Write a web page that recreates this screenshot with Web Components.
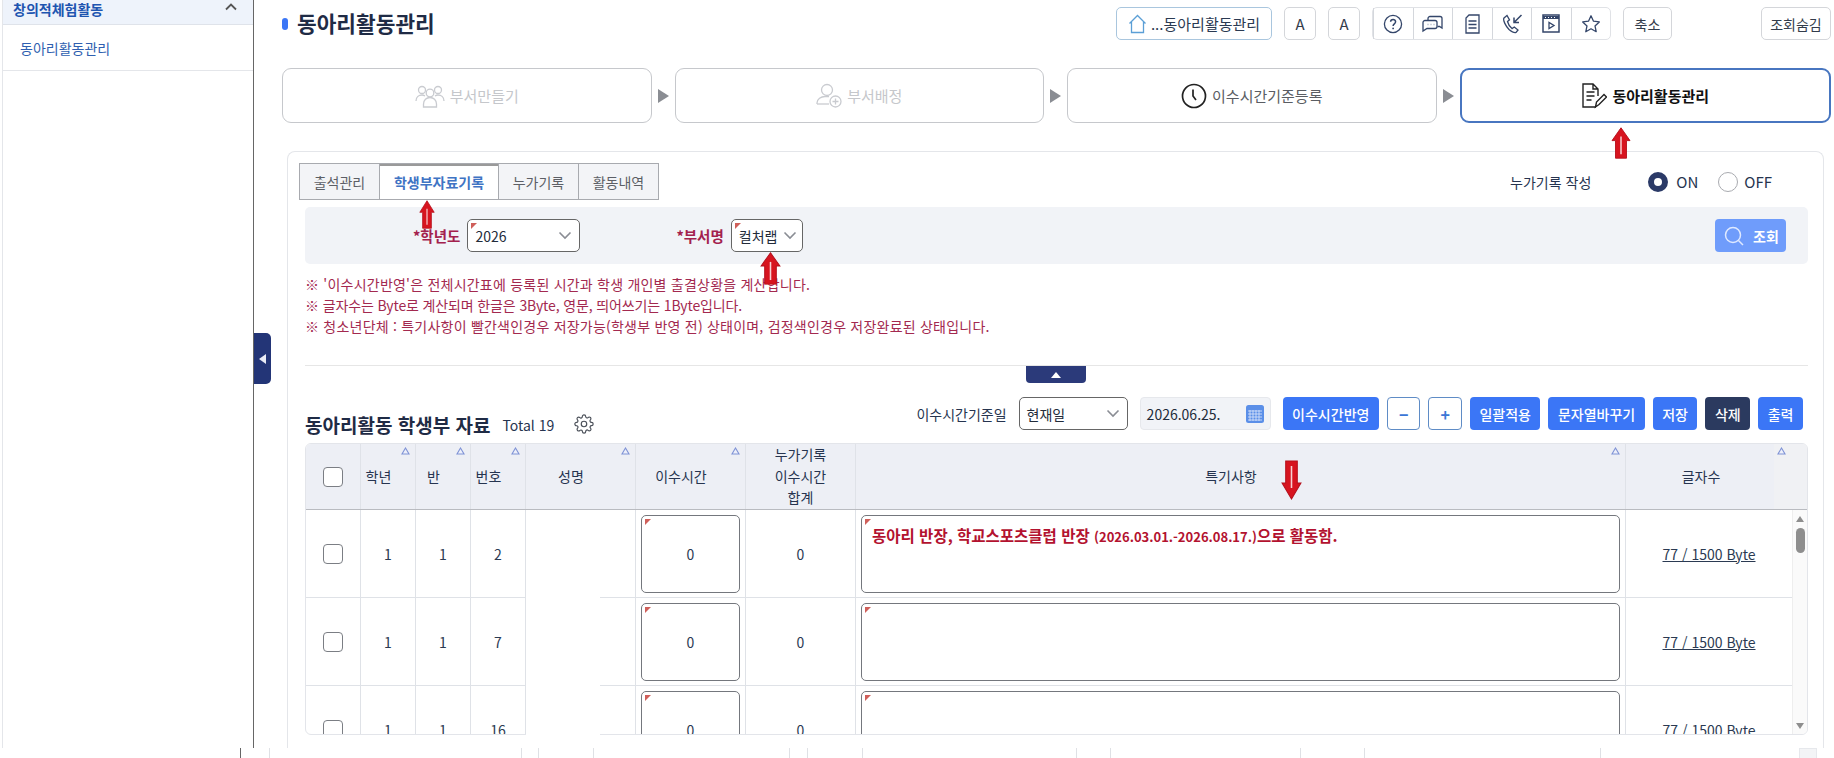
<!DOCTYPE html>
<html lang="ko"><head><meta charset="utf-8"><title>동아리활동관리</title>
<style>html,body{margin:0;padding:0;background:#fff;overflow:hidden}body{font-family:"Noto Sans CJK KR","Noto Sans",sans-serif;color:#2b3a52}</style></head>
<body><hk-app></hk-app>
<script>
const FONT='"Noto Sans CJK KR","Noto Sans",sans-serif';
const base=`*{box-sizing:border-box}`;
function def(name,css,html){customElements.define(name,class extends HTMLElement{connectedCallback(){if(this.shadowRoot)return;const r=this.attachShadow({mode:'open'});r.innerHTML=`<style>${base}${css}</style>`+(typeof html==='function'?html(this):html)}})}
const corner=`position:absolute;left:3px;top:3px;width:0;height:0;border-top:6px solid #cf5f5a;border-right:6px solid transparent;content:""`;
const chev=`<svg width="14" height="9" viewBox="0 0 14 9" fill="none"><path d="M1.500 1.500 7 7l5.500-5.500" stroke="#8a8d94" stroke-width="1.600"/></svg>`;
const sort=`<svg class="sort" width="9" height="8" viewBox="0 0 9 8"><path d="M4.500 1 8 7H1z" fill="#eef0fa" stroke="#7f93d6" stroke-width="1.100"/></svg>`;

def('hk-select',`:host{display:inline-flex;position:relative;align-items:center;justify-content:space-between;height:33px;padding:0 7px 0 7px;border:1px solid #666;border-radius:5px;background:#fff;font-size:14px;color:#222b3a}:host(.c)::before{${corner}}span{padding-top:1px}`,`<span><slot></slot></span>${chev}`);
def('hk-btn',`:host{display:inline-flex;align-items:center;justify-content:center;height:33px;padding:0 9.5px;background:#3b76f6;color:#fff;border-radius:4px;font-size:14px;font-weight:500;white-space:nowrap}:host(.dark){background:#2b3a5f}:host(.out){width:33.5px;padding:0;background:#fff;border:1px solid #5f8cc6;color:#3b76d6;font-weight:700;font-size:16px}`,`<slot></slot>`);
def('hk-tool',`:host{display:inline-flex;align-items:center;justify-content:center;height:33px;border:1px solid #d4d6da;border-radius:5px;background:#fff;font-size:14px;color:#333c4b;white-space:nowrap;gap:3px}:host(.home){border-color:#a9c6de;font-size:15px;color:#2b3a52;gap:4px}`,`<slot></slot>`);
def('hk-icongroup',`:host{display:flex;height:33px;width:239px;border:1px solid #e0e2e6;border-radius:5px;background:#fff}span{flex:1;display:flex;align-items:center;justify-content:center;border-left:1px solid #d4d7dc}span:first-child{border-left:0}svg{fill:none;stroke:#34466a;stroke-width:1.300}`,`
<span><svg width="20" height="20" viewBox="0 0 20 20"><circle cx="10" cy="10" r="8.600"/><path d="M7.600 7.800c0-3.200 5-3.200 5 0 0 2.100-2.500 2-2.500 4.100" stroke-width="1.500"/><circle cx="10.100" cy="14.400" r=".9" fill="#34466a" stroke="none"/></svg></span>
<span><svg width="22" height="18" viewBox="0 0 22 18"><path d="M6 5.500V3.500a2 2 0 0 1 2-2h10a2 2 0 0 1 2 2V13l-2.500-1.500H15.500"/><path d="M3 5.500h10a2 2 0 0 1 2 2v4a2 2 0 0 1-2 2H5l-4 2.500V7.500a2 2 0 0 1 2-2z" fill="#fff"/><path d="M5.500 9.500h1M8.500 9.500h1M11.500 9.500h1" stroke="#a4adbd" stroke-width="1.500"/></svg></span>
<span><svg width="15" height="20" viewBox="0 0 15 20"><path d="M4 1h10v18H1V4z"/><path d="M3.500 7h8M3.500 10.500h8M3.500 14h8"/></svg></span>
<span><svg width="22" height="20" viewBox="0 0 22 20"><path d="M6 1.500 3 4c-1.500 2 2 8.500 5 11.500 3 2.500 5.500 3.500 7 3l2-2.500-3.700-3-2.300 1.600C9 13 7 9.500 6.500 7.500l2-1.700z"/><path d="M20.500 1 13 8.500M13 3.500v5h5" stroke-width="1.500"/></svg></span>
<span><svg width="18" height="19" viewBox="0 0 18 19"><rect x="1" y="1" width="16" height="17" stroke-width="1.500"/><path d="M1 3.500h16" stroke-width="3"/><path d="M3 3.500h1M6 3.500h1M9 3.500h1M12 3.500h1" stroke="#fff" stroke-width="1"/><path d="M7 8.500v6l5-3z"/></svg></span>
<span><svg width="20" height="20" viewBox="0 0 20 20"><path d="M10 1.800 12.500 7.200l5.800.7-4.300 4 1.200 5.800L10 14.800l-5.200 2.900L6 11.900l-4.300-4 5.800-.7z" stroke-linejoin="round"/></svg></span>`);

def('hk-header',`:host{display:flex;align-items:center;height:33px;margin-top:7px}.b{width:6px;height:12px;border-radius:3px;background:#3b76f6;margin-right:9px}h1{margin:0;font-size:21.400px;font-weight:700;color:#1f2b45;position:relative;top:-1px}.r{margin-left:auto;display:flex;gap:12px;align-items:center}.hide{margin-left:77px}`,`
<div class="b"></div><h1>동아리활동관리</h1>
<div class="r">
<hk-tool class="home" style="width:156px"><svg width="19" height="20" viewBox="0 0 19 20" fill="none" stroke="#5b9fd6" stroke-width="1.300"><path d="M1.500 9.500 9.500 1.500l8 8M3.500 8v10.500h12V8"/></svg>...동아리활동관리</hk-tool>
<hk-tool style="width:32px;font-size:15px">A</hk-tool><hk-tool style="width:32px;font-size:15px">A</hk-tool>
<hk-icongroup></hk-icongroup>
<hk-tool style="width:49px">축소</hk-tool>
<hk-tool class="hide" style="width:70px">조회숨김</hk-tool>
</div>`);

const stepIcons={
p:`<svg width="30" height="24" viewBox="0 0 30 24" fill="none" stroke="#c9cbd0" stroke-width="1.300"><circle cx="7" cy="6" r="3.500"/><circle cx="23" cy="6" r="3.500"/><circle cx="15" cy="9" r="3.800"/><path d="M1 17c0-4 3-6 6-6 1 0 2 .3 3 1M29 17c0-4-3-6-6-6-1 0-2 .3-3 1M8.500 23v-3c0-4 3-6.500 6.500-6.500s6.500 2.500 6.500 6.500v3z"/></svg>`,
u:`<svg width="26" height="25" viewBox="0 0 26 25" fill="none" stroke="#c9cbd0" stroke-width="1.300"><circle cx="11" cy="7" r="5.500"/><path d="M1 21v-1c0-4 4-6.500 8-6.500h4"/><path d="M1 21h12"/><circle cx="19.500" cy="18.500" r="5.500"/><path d="M19.500 15.500v6M16.500 18.500h6"/></svg>`,
c:`<svg width="26" height="26" viewBox="0 0 26 26" fill="none" stroke="#222" stroke-width="1.700"><circle cx="13" cy="13" r="11.500"/><path d="M12 6.500v6.500l3 4"/></svg>`,
d:`<svg width="26" height="27" viewBox="0 0 26 27" fill="none" stroke="#222" stroke-width="1.400"><path d="M15 25H2V2h10l5 5v7M12 2v5h5M5.500 10h8M5.500 14h8M5.500 18h5"/><path d="m14.500 25 1-5L23 12.500l2.500 2.500-7.500 7.500z" fill="#fff"/></svg>`};
def('hk-step',`:host{flex:1;display:flex;align-items:center;justify-content:center;gap:5px;height:55px;border:1px solid #c6c8cc;border-radius:9px;font-size:15px;background:#fff;color:#c5c7cb}:host(.on){color:#5a5d63}:host(.cur){border:2px solid #4876c0;color:#111;font-weight:700}`,h=>`${stepIcons[h.getAttribute('icon')]}<slot></slot>`);
def('hk-steps',`:host{display:flex;align-items:center;margin-top:28px}i{flex:0 0 23px;display:flex;justify-content:center}i::before{content:"";width:0;height:0;border-left:11px solid #8a8d93;border-top:7px solid transparent;border-bottom:7px solid transparent}`,`
<hk-step icon="p">부서만들기</hk-step><i></i><hk-step icon="u">부서배정</hk-step><i></i><hk-step class="on" icon="c">이수시간기준등록</hk-step><i></i><hk-step class="cur" icon="d">동아리활동관리</hk-step>`);

def('hk-tabs',`:host{display:flex;height:37px;margin-left:-6px;align-items:center}.t{display:flex;height:37px;border:1px solid #a8aaaf}.t span{width:80px;display:flex;align-items:center;justify-content:center;background:#f3f4f7;font-size:14px;color:#5c5f66;border-left:1px solid #a8aaaf}.t span:first-child{border-left:0;width:79px}.t span.a{width:119px;background:#fff;color:#3f74c4;font-weight:700;box-shadow:inset 0 2px 0 #9a9a9a}
.r{margin-left:auto;margin-right:36px;display:flex;align-items:center;font-size:14px;color:#26344f}.l{margin-right:57px}.s{font-size:15px}.o{width:20px;height:20px;border-radius:50%;margin-right:8px}.on{background:#fff;border:6.500px solid #2b3a67}.off{border:1.500px solid #a9abb0;margin-left:20px;margin-right:6px}`,`
<div class="t"><span>출석관리</span><span class="a">학생부자료기록</span><span>누가기록</span><span>활동내역</span></div>
<div class="r"><span class="l">누가기록 작성</span><span class="o on"></span><span class="s">ON</span><span class="o off"></span><span class="s">OFF</span></div>`);

def('hk-search',`:host{display:flex;align-items:center;height:57px;margin-top:7px;padding-left:108px;padding-right:22px;background:#f1f3f7;border-radius:5px}label{font-size:14.500px;font-weight:700;color:#a3214d;margin-right:7px;white-space:nowrap}.b{margin-left:auto;width:71px;height:33px;background:#6f9cfb;border-radius:4px;display:flex;align-items:center;justify-content:center;gap:9px;color:#fff;font-weight:700;font-size:14px;padding-left:2px}`,`
<label>*학년도</label><hk-select class="c" style="width:113px">2026</hk-select>
<label style="margin-left:96px">*부서명</label><hk-select class="c" style="width:72px;padding-right:5px">컬처랩</hk-select>
<div class="b"><svg width="20" height="20" viewBox="0 0 20 20" fill="none" stroke="#dfe9ff" stroke-width="1.500"><circle cx="9" cy="9" r="7.500"/><path d="m14.500 14.500 4.500 4.500"/></svg>조회</div>`);

def('hk-notes',`:host{display:block;margin-top:10px;font-size:14px;line-height:21px;color:#a3294f;white-space:nowrap}div{height:21px}`,`<div style="letter-spacing:.22px">※ '이수시간반영'은 전체시간표에 등록된 시간과 학생 개인별 출결상황을 계산합니다.</div><div style="letter-spacing:-.13px">※ 글자수는 Byte로 계산되며 한글은 3Byte, 영문, 띄어쓰기는 1Byte입니다.</div><div style="letter-spacing:.22px">※ 청소년단체 : 특기사항이 빨간색인경우 저장가능(학생부 반영 전) 상태이며, 검정색인경우 저장완료된 상태입니다.</div>`);

const gear=`M19.400 15a1.650 1.650 0 0 0 .33 1.820l.06.06a2 2 0 0 1 0 2.830 2 2 0 0 1-2.830 0l-.06-.06a1.650 1.650 0 0 0-1.820-.33 1.650 1.650 0 0 0-1 1.510V21a2 2 0 0 1-2 2 2 2 0 0 1-2-2v-.09A1.650 1.650 0 0 0 9 19.400a1.650 1.650 0 0 0-1.820.33l-.06.06a2 2 0 0 1-2.830 0 2 2 0 0 1 0-2.830l.06-.06a1.650 1.650 0 0 0 .33-1.820 1.650 1.650 0 0 0-1.510-1H3a2 2 0 0 1-2-2 2 2 0 0 1 2-2h.09A1.650 1.650 0 0 0 4.600 9a1.650 1.650 0 0 0-.33-1.820l-.06-.06a2 2 0 0 1 0-2.830 2 2 0 0 1 2.830 0l.06.06a1.650 1.650 0 0 0 1.820.33H9a1.650 1.650 0 0 0 1-1.510V3a2 2 0 0 1 2-2 2 2 0 0 1 2 2v.09a1.650 1.650 0 0 0 1 1.510 1.650 1.650 0 0 0 1.820-.33l.06-.06a2 2 0 0 1 2.830 0 2 2 0 0 1 0 2.830l-.06.06a1.650 1.650 0 0 0-.33 1.820V9a1.650 1.650 0 0 0 1.510 1H21a2 2 0 0 1 2 2 2 2 0 0 1-2 2h-.09a1.650 1.650 0 0 0-1.510 1z`;
def('hk-section',`:host{display:flex;height:33px;margin-top:31px;padding-right:5px;align-items:center}.l{display:flex;align-items:center;padding-top:21px;height:33px;white-space:nowrap}h2{margin:0;font-size:19px;font-weight:700;color:#1f2b45}.tot{font-size:14px;margin-left:12px;color:#26344f;padding-top:2px}svg.g{margin-left:20px}.r{margin-left:auto;display:flex;align-items:center;gap:8px}.k{font-size:14px;color:#26344f;margin-right:4px}.d{width:131px;height:33px;margin:0 4px;background:#f1f3f7;border:1px solid #e6e8ec;border-radius:4px;display:flex;align-items:center;justify-content:space-between;padding:0 6px 0 6px;font-size:14px;color:#222b3a}`,`
<div class="l"><h2>동아리활동 학생부 자료</h2><span class="tot">Total 19</span>
<svg class="g" width="20" height="20" viewBox="0 0 24 24" fill="none" stroke="#4a4f58" stroke-width="1.400"><circle cx="12" cy="12" r="3.300"/><path d="${gear}"/></svg></div>
<div class="r"><span class="k">이수시간기준일</span><hk-select style="width:109px">현재일</hk-select>
<div class="d">2026.06.25.<svg width="18" height="18" viewBox="0 0 18 18"><rect x="0" y="0" width="18" height="18" rx="2.500" fill="#5b8fe8"/><path d="M2 6h14M2 9h14M2 12h14M2 15h14M4 5v11M7 5v11M10 5v11M13 5v11" stroke="#dfe9fb" stroke-width=".8"/></svg></div>
<hk-btn>이수시간반영</hk-btn><hk-btn class="out">−</hk-btn><hk-btn class="out">+</hk-btn><hk-btn>일괄적용</hk-btn><hk-btn>문자열바꾸기</hk-btn><hk-btn>저장</hk-btn><hk-btn class="dark">삭제</hk-btn><hk-btn>출력</hk-btn></div>`);

const cols='55px 55px 55px 55px 110px 110px 110px 770px minmax(0,1fr)';
def('hk-box',`:host{display:block;position:relative;height:100%;background:#fff;border:1px solid #74777d;border-radius:5px}:host::before{${corner}}`,`<slot></slot>`);
def('hk-check',`:host{display:block;width:20px;height:20px;background:#fff;border:1px solid #7b7e84;border-radius:4px}`,``);
def('hk-row',`:host{display:grid;grid-template-columns:${cols};height:88px;border-bottom:1px solid #dfe2e7;font-size:14px;color:#2b3a52}.c{display:flex;align-items:center;justify-content:center;border-right:1px solid #dfe2e7;min-width:0}.p{padding:5px 5px 4px}.p hk-box{width:100%}.z{display:flex;align-items:center;justify-content:center}.t{padding:9px 10px;font-weight:700;font-size:15.500px;line-height:20px;color:#b3122f;white-space:nowrap}.t small{font-size:13px}.u{text-decoration:underline;border-right:0;white-space:nowrap}`,h=>{const g=a=>h.getAttribute(a)||'';return `
<div class="c"><hk-check></hk-check></div><div class="c">${g('a')}</div><div class="c">${g('b')}</div><div class="c">${g('n')}</div><div class="c"></div>
<div class="c p"><hk-box><div class="z" style="height:100%">0</div></hk-box></div><div class="c">0</div>
<div class="c p"><hk-box><div class="t">${g('t')?'동아리 반장, 학교스포츠클럽 반장 <small>(2026.03.01.-2026.08.17.)</small>으로 활동함.':''}</div></hk-box></div>
<div class="c u">77 / 1500 Byte</div>`});
def('hk-table',`:host{display:block;position:relative;height:292px;margin-top:13px}.w{height:100%;border:1px solid #e3e5ea;border-radius:6px;overflow:hidden;background:#fff}
.h{display:grid;grid-template-columns:${cols};height:66px;background:#edeff5;border-bottom:1px solid #b9bbc0;font-size:14px;color:#26344f}.h>div{position:relative;display:flex;align-items:center;justify-content:center;border-right:1px solid #dfe2e8;text-align:center;line-height:21.500px;padding-right:19px}.h>div.n{padding-right:0}.h>div:last-child{border-right:0;padding-right:31px;background:linear-gradient(90deg,#edeff5 0 148px,#f0f1f4 148px)}.sort{position:absolute;right:5px;top:3px}.h>div:last-child .sort{right:21px}
.b{display:flex;height:226px;overflow:hidden;position:relative}.rows{flex:1;min-width:0}.sb{flex:0 0 15px;background:#fafafa;border-left:1px solid #eee;position:relative}.up,.dn{position:absolute;left:2.500px;width:0;height:0;border-left:4px solid transparent;border-right:4px solid transparent}.up{top:6px;border-bottom:6px solid #8e8e8e}.dn{bottom:7px;border-top:6px solid #8e8e8e}.th{position:absolute;left:2.500px;top:18px;width:9px;height:25px;border-radius:5px;background:#8e8e8e}
.mask{position:absolute;left:221px;top:67px;width:74px;bottom:0;background:#fff}`,`
<div class="w"><div class="h"><div class="n"><hk-check></hk-check></div><div>학년${sort}</div><div>반${sort}</div><div>번호${sort}</div><div>성명${sort}</div><div>이수시간${sort}</div><div class="n">누가기록<br>이수시간<br>합계</div><div>특기사항${sort}</div><div>글자수${sort}</div></div>
<div class="b"><div class="rows"><hk-row a="1" b="1" n="2" t="1"></hk-row><hk-row a="1" b="1" n="7"></hk-row><hk-row a="1" b="1" n="16"></hk-row></div><div class="sb"><i class="up"></i><i class="th"></i><i class="dn"></i></div></div></div>
<div class="mask"></div>`);

def('hk-card',`:host{display:block;height:597px;margin:28px 7px 0 5px;padding:11px 15px 0 17px;border:1px solid #e4e6ea;border-bottom:0;border-radius:8px 8px 0 0;overflow:hidden}.dv{border-top:1px solid #e6e6e6;margin-top:28px}`,`
<hk-tabs></hk-tabs><hk-search></hk-search><hk-notes></hk-notes><div class="dv"></div><hk-section></hk-section><hk-table></hk-table>`);

def('hk-sidebar',`:host{display:block;width:252px;margin-left:2px;border-left:1px solid #e4e6ea;border-right:1px solid #666;flex:none;font-size:14px}.h{height:25px;background:#eef3fb;border-bottom:1px solid #dfe3ea;display:flex;justify-content:space-between;padding:0 16px 0 10px;color:#1e55b0;font-weight:700;line-height:18px}.i{height:46px;line-height:46px;padding-left:17px;color:#2f5fb0;border-bottom:1px solid #e4e6ea}`,`
<div class="h"><span>창의적체험활동</span><svg width="12" height="8" viewBox="0 0 12 8" fill="none" style="margin-top:3px"><path d="M1 6.500 6 1.500l5 5" stroke="#555" stroke-width="1.800"/></svg></div><div class="i">동아리활동관리</div>`);

def('hk-arrow',`:host{position:absolute;display:block;line-height:0}`,h=>{const w=+h.getAttribute('w'),ht=+h.getAttribute('h'),d=h.hasAttribute('down');return `<svg width="${w}" height="${ht}" viewBox="0 0 20 40" preserveAspectRatio="none" style="${d?'transform:scaleY(-1)':''}"><path d="M10 1 19 17h-3.500v22h-11V17H1z" fill="#d7141f" stroke="#b5101c"/><path d="M10 12v22" stroke="#fff" stroke-width="1.500" opacity=".8"/></svg>`});
def('hk-handle',`:host{position:absolute;left:254px;top:333px;width:17px;height:51px;background:#233577;border-radius:0 5px 5px 0;display:flex;align-items:center;justify-content:center}i{width:0;height:0;border-right:7px solid #e9ecf6;border-top:5px solid transparent;border-bottom:5px solid transparent}`,`<i></i>`);
def('hk-collapse',`:host{position:absolute;left:1026px;top:366px;width:60px;height:17px;background:#2b3a7a;border-radius:0 0 4px 4px;display:flex;align-items:center;justify-content:center}i{width:0;height:0;border-bottom:6px solid #fff;border-left:5px solid transparent;border-right:5px solid transparent}`,`<i></i>`);

const ghost=[[240,'#666'],[269],[521],[538],[593],[789],[807],[862],[1076],[1110],[1300],[1364],[1600]];
def('hk-ghost',`:host{display:flex;height:10px}span{flex:none;height:10px;border-right:1px solid #dfe1e5}.box{width:18px;height:10px;margin-left:auto;margin-right:17px;background:#f3f4f6;border:1px solid #e6e8ec;border-bottom:0}`,(()=>{let p=0,s='';for(const [x,c] of ghost){s+=`<span style="width:${x-p+1}px;${c?'border-color:'+c:''}"></span>`;p=x+1}return s+'<div class="box"></div>'})());

def('hk-main',`:host{display:block;flex:1;min-width:0;padding:0 3px 0 28px}`,`<hk-header></hk-header><hk-steps></hk-steps><hk-card></hk-card>`);
def('hk-app',`:host{display:block;position:relative;width:1834px;height:758px;overflow:hidden;background:#fff;font-family:${FONT}}.top{display:flex;height:748px}`,`
<div class="top"><hk-sidebar></hk-sidebar><hk-main></hk-main></div><hk-ghost></hk-ghost>
<hk-handle></hk-handle><hk-collapse></hk-collapse>
<hk-arrow w="20" h="32" style="left:1611px;top:127px"></hk-arrow>
<hk-arrow w="16" h="29" style="left:419px;top:200px"></hk-arrow>
<hk-arrow w="21" h="33" style="left:760px;top:252px"></hk-arrow>
<hk-arrow w="21" h="40" down style="left:1281px;top:460px"></hk-arrow>`);
</script></body></html>
